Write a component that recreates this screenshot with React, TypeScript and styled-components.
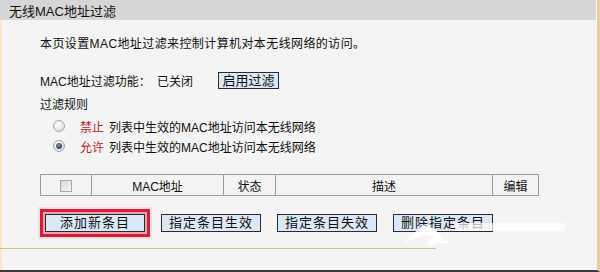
import styled, { createGlobalStyle } from 'styled-components';

const GlobalStyle = createGlobalStyle`
	html, body {
		margin: 0;
		padding: 0;
		background: #f4f4f4;
	}
	body {
		font-family: 'Liberation Sans', 'Noto Sans CJK SC', sans-serif;
		font-size: 12px;
		color: #111;
	}
`;

const Page = styled.div`
	position: relative;
	width: 600px;
	height: 272px;
	box-sizing: border-box;
	display: flex;
	flex-direction: column;
	background: #f4f4f4;
	border-right: 3px solid #e6cf9c;
	border-bottom: 2px solid #3a3a3a;
	overflow: hidden;
`;

const TitleBar = styled.div`
	height: 20px;
	flex: none;
	display: flex;
	align-items: center;
	padding-left: 9px;
	background: #d6d6d6;
	font-size: 13px;
	color: #111;
	border-right: 1px solid #f8f8f8;
`;

const Body = styled.div`
	flex: 1;
	display: flex;
	flex-direction: column;
	border-left: 2px solid #fbe7c6;
	padding: 12px 0 0 38px;
`;

const Line = styled.div`
	height: 20px;
	display: flex;
	align-items: center;
	white-space: nowrap;
	letter-spacing: 0.4px;
`;

const StatusRow = styled.div`
	height: 17px;
	margin-top: 20px;
	display: flex;
	align-items: center;
	white-space: nowrap;
`;

const Label = styled.span<{ $width?: number }>`
	display: inline-block;
	width: ${({ $width }) => ($width ? `${$width}px` : 'auto')};
`;

const RuleHeading = styled(Line)`
	margin-top: 4px;
	letter-spacing: 0;
`;

const RadioList = styled.div`
	margin-top: 3px;
	display: flex;
	flex-direction: column;
`;

const RadioRow = styled.label`
	height: 20px;
	display: flex;
	align-items: center;
	padding-left: 13px;
	white-space: nowrap;
`;

const Radio = styled.span<{ $checked?: boolean }>`
	position: relative;
	width: 12px;
	height: 12px;
	box-sizing: border-box;
	border-radius: 50%;
	border: 1px solid #a4a8ac;
	background: radial-gradient(circle at 40% 35%, #ffffff 0%, #e4e4e4 60%, #c8c8c8 100%);
	margin-right: 15px;
	&::after {
		content: '';
		display: ${({ $checked }) => ($checked ? 'block' : 'none')};
		position: absolute;
		left: 2px;
		top: 2px;
		width: 6px;
		height: 6px;
		border-radius: 50%;
		background: radial-gradient(circle at 40% 35%, #7a8ea8 0%, #2c3c50 80%);
	}
`;

const Keyword = styled.span`
	color: #b8262a;
	margin-right: 5px;
`;

const Table = styled.table`
	margin-top: 18px;
	width: 499px;
	border-collapse: collapse;
	border: 1px solid #9a9a9a;
	& th {
		height: 20px;
		padding: 0;
		border: 1px solid #9a9a9a;
		font-weight: normal;
		font-size: 12px;
		text-align: center;
	}
`;

const CheckBox = styled.span`
	display: inline-block;
	width: 12px;
	height: 12px;
	box-sizing: border-box;
	border: 1px solid #a8a8a8;
	background: linear-gradient(135deg, #d8d8d8, #f6f6f6);
	vertical-align: middle;
`;

const ButtonRow = styled.div`
	margin-top: 18px;
	display: flex;
	align-items: center;
	padding-left: 5px;
	gap: 16px;
`;

const Button = styled.button<{ $highlight?: boolean }>`
	width: 100px;
	height: 18px;
	padding: 0;
	box-sizing: border-box;
	border: 1px solid #2a2a2a;
	background: #dbe8f6;
	font-family: 'Liberation Sans', 'Noto Sans CJK SC', sans-serif;
	font-size: 13px;
	line-height: 16px;
	color: #111;
	letter-spacing: 1px;
	outline: ${({ $highlight }) => ($highlight ? '3px solid #d81a3c' : 'none')};
	outline-offset: 2px;
	border-radius: 0;
	box-shadow: ${({ $highlight }) =>
		$highlight ? '0 0 0 5px rgba(216, 26, 60, 0.3), 0 0 0 7px rgba(216, 26, 60, 0.1)' : 'none'};
`;

const SmallButton = styled(Button)`
	width: 61px;
	height: 17px;
	letter-spacing: 0;
	margin-left: 2px;
`;

const Footer = styled.div`
	margin-top: 16px;
	margin-left: -40px;
	width: 436px;
	border-top: 1px solid #d9bc86;
`;

const Watermark = styled.svg`
	position: absolute;
	left: 395px;
	top: 205px;
	pointer-events: none;
`;

export default function App() {
	return (
		<>
			<GlobalStyle />
			<Page>
				<TitleBar>无线MAC地址过滤</TitleBar>
				<Body>
					<Line>本页设置MAC地址过滤来控制计算机对本无线网络的访问。</Line>
					<StatusRow>
						<Label $width={117}>MAC地址过滤功能：</Label>
						<Label $width={59}>已关闭</Label>
						<SmallButton>启用过滤</SmallButton>
					</StatusRow>
					<RuleHeading>过滤规则</RuleHeading>
					<RadioList>
						<RadioRow>
							<Radio />
							<Keyword>禁止</Keyword>
							列表中生效的MAC地址访问本无线网络
						</RadioRow>
						<RadioRow>
							<Radio $checked />
							<Keyword>允许</Keyword>
							列表中生效的MAC地址访问本无线网络
						</RadioRow>
					</RadioList>
					<Table>
						<thead>
							<tr>
								<th style={{ width: 50 }}>
									<CheckBox />
								</th>
								<th style={{ width: 131 }}>MAC地址</th>
								<th style={{ width: 51 }}>状态</th>
								<th style={{ width: 216 }}>描述</th>
								<th>编辑</th>
							</tr>
						</thead>
					</Table>
					<ButtonRow>
						<Button $highlight>添加新条目</Button>
						<Button>指定条目生效</Button>
						<Button>指定条目失效</Button>
						<Button>删除指定条目</Button>
					</ButtonRow>
					<Footer />
				</Body>
				<Watermark width="205" height="67" viewBox="0 0 205 67">
					<path d="M8 38 L28 20 L40 24 L48 34 L30 30 Z" fill="#ffffff" opacity="0.95" />
					<path d="M40 30 L60 40 L30 40 Z" fill="#ffffff" opacity="0.8" />
					<rect x="42" y="38" width="163" height="29" fill="#f4f4f4" opacity="0.9" />
					<rect x="60" y="18" width="110" height="8" fill="#ffffff" opacity="0.7" />
				</Watermark>
			</Page>
		</>
	);
}
